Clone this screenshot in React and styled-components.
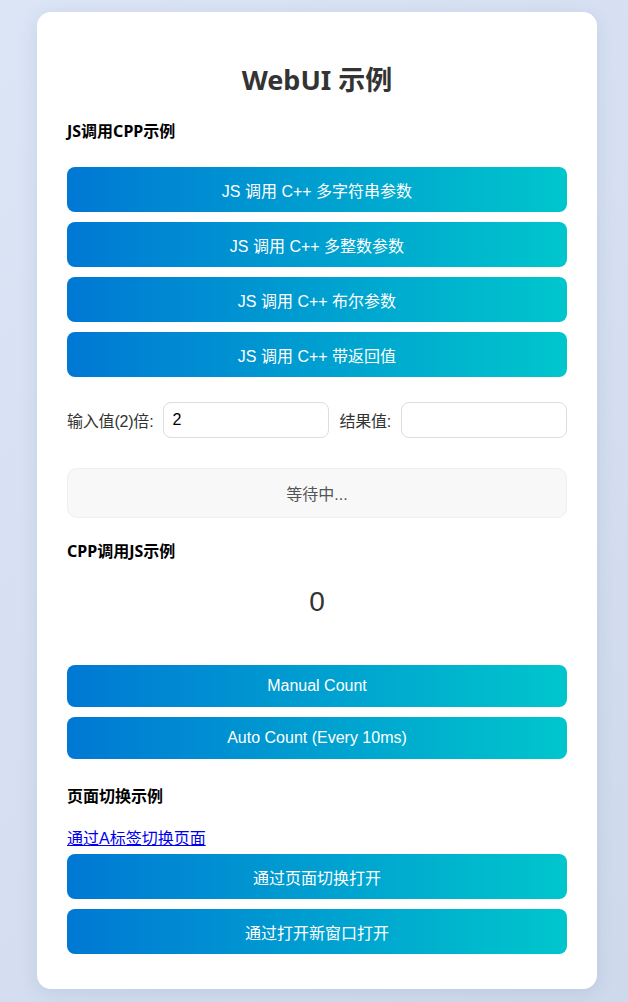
import React from "react";
import styled, { createGlobalStyle } from "styled-components";

const Global = createGlobalStyle`
  html, body { margin: 0; padding: 0; }
  body {
    background: linear-gradient(135deg, #dbe5f6 0%, #d4def0 60%, #cfd9ec 100%);
    min-height: 1002px;
    font-family: "Liberation Sans", "Noto Sans CJK SC", sans-serif;
    box-sizing: border-box;
    padding: 12px 31px 13px 37px;
  }
  * { box-sizing: border-box; }
`;

const Card = styled.main`
  background: #ffffff;
  border-radius: 14px;
  box-shadow: 0 4px 18px rgba(60, 80, 130, 0.12);
  padding: 48px 30px 35px;
  display: flex;
  flex-direction: column;
`;

const Title = styled.h1`
  margin: 0;
  text-align: center;
  font-family: "Noto Sans", "Noto Sans CJK SC", sans-serif;
  font-weight: 700;
  font-size: 27px;
  line-height: 40px;
  color: #333333;
`;

const Heading = styled.h3`
  margin: ${(p) => p.$mt}px 0 0;
  font-family: "Noto Sans", "Noto Sans CJK SC", sans-serif;
  font-size: 16px;
  font-weight: 700;
  line-height: 22px;
  color: #000000;
`;

const ButtonStack = styled.div`
  display: flex;
  flex-direction: column;
  gap: 10px;
  margin-top: ${(p) => p.$mt}px;
`;

const GradButton = styled.button`
  height: ${(p) => p.$h}px;
  width: 100%;
  border: none;
  border-radius: 8px;
  background: linear-gradient(90deg, #0078d4 0%, #00c6cc 100%);
  color: #ffffff;
  font-family: "Liberation Sans", "Noto Sans CJK SC", sans-serif;
  font-size: 16px;
  display: flex;
  align-items: center;
  justify-content: center;
  cursor: pointer;
  padding: 0 12px;
`;

const InputRow = styled.div`
  display: flex;
  align-items: center;
  gap: 10px;
  margin-top: 25px;
`;

const Label = styled.label`
  font-size: 16px;
  color: #333333;
  white-space: nowrap;
  letter-spacing: -0.2px;
  font-family: "Liberation Sans", "Noto Sans CJK SC", sans-serif;
`;

const Field = styled.input`
  flex: 1;
  min-width: 0;
  height: 36px;
  border: 1px solid #dddddd;
  border-radius: 8px;
  padding: 0 8px;
  font-size: 16px;
  font-family: "Liberation Sans", sans-serif;
  color: #000;
  outline: none;
`;

const Status = styled.div`
  margin-top: 30px;
  height: 50px;
  background: #f8f8f8;
  border: 1px solid #efefef;
  border-radius: 10px;
  display: flex;
  align-items: center;
  justify-content: center;
  color: #555555;
  font-size: 16px;
`;

const Counter = styled.div`
  margin-top: 20px;
  text-align: center;
  font-size: 28px;
  line-height: 40px;
  color: #333333;
  font-family: "Liberation Sans", sans-serif;
`;

const Link = styled.a`
  margin-top: 22px;
  align-self: flex-start;
  font-size: 16px;
  line-height: 20px;
  color: #0000ee;
  text-decoration: underline;
`;

const jsButtons = [
  "JS 调用 C++ 多字符串参数",
  "JS 调用 C++ 多整数参数",
  "JS 调用 C++ 布尔参数",
  "JS 调用 C++ 带返回值",
];

export default function App() {
  return (
    <>
      <Global />
      <Card>
        <Title>WebUI 示例</Title>
        <Heading $mt={20}>JS调用CPP示例</Heading>
        <ButtonStack $mt={25}>
          {jsButtons.map((t) => (
            <GradButton key={t} $h={45}>{t}</GradButton>
          ))}
        </ButtonStack>
        <InputRow>
          <Label>输入值(2)倍:</Label>
          <Field defaultValue="2" />
          <Label>结果值:</Label>
          <Field defaultValue="" />
        </InputRow>
        <Status>等待中...</Status>
        <Heading $mt={22}>CPP调用JS示例</Heading>
        <Counter>0</Counter>
        <ButtonStack $mt={43}>
          <GradButton $h={42}>Manual Count</GradButton>
          <GradButton $h={42}>Auto Count (Every 10ms)</GradButton>
        </ButtonStack>
        <Heading $mt={26}>页面切换示例</Heading>
        <Link href="#">通过A标签切换页面</Link>
        <ButtonStack $mt={5}>
          <GradButton $h={45}>通过页面切换打开</GradButton>
          <GradButton $h={45}>通过打开新窗口打开</GradButton>
        </ButtonStack>
      </Card>
    </>
  );
}
